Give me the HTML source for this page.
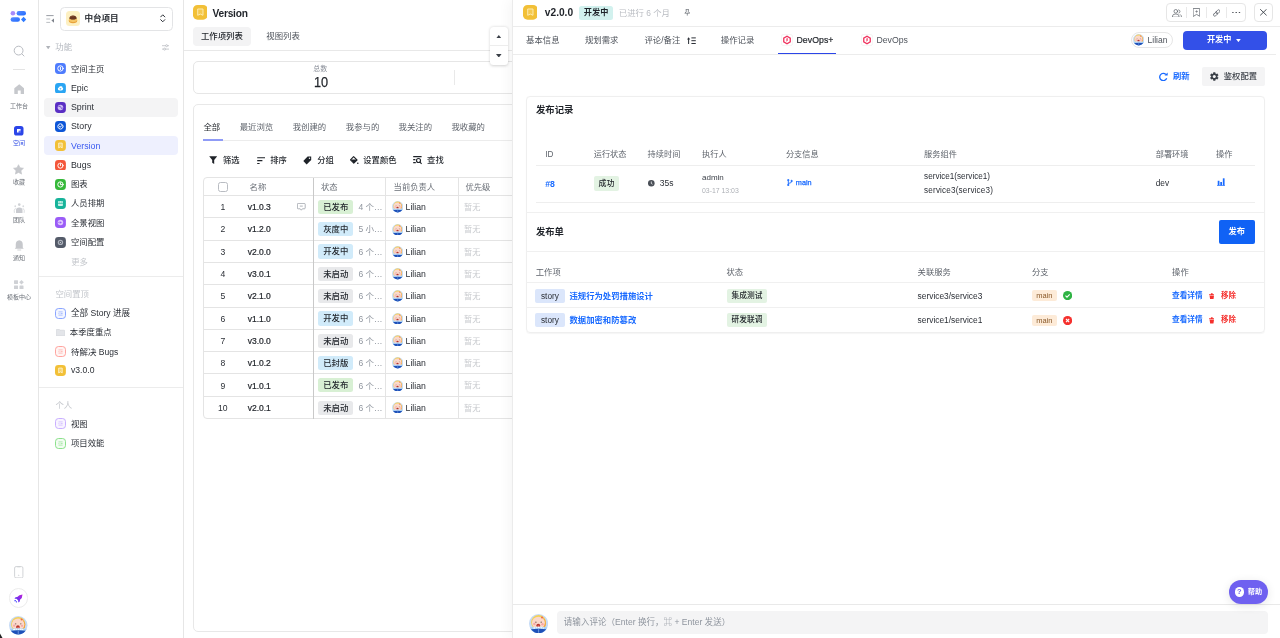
<!DOCTYPE html>
<html>
<head>
<meta charset="utf-8">
<title>Version</title>
<style>
*{box-sizing:border-box;margin:0;padding:0}
html,body{width:1280px;height:638px;overflow:hidden;background:#fff}
body{font-family:"Liberation Sans","Noto Sans CJK SC",sans-serif;font-size:9px;color:#1f2329;position:relative}
svg{display:block}
i{font-style:normal}
#rail{will-change:transform;position:absolute;left:0;top:0;width:39px;height:638px;border-right:1px solid #e6e6e6;background:#fff}
.rl{position:absolute;left:0;width:38px;text-align:center;font-size:6px;line-height:8px;color:#6b7078;white-space:nowrap}
.ri{position:absolute}
#side{will-change:transform;position:absolute;left:39px;top:0;width:145px;height:638px;border-right:1px solid #e6e6e6;background:#fff}
.sh{position:absolute;left:16px;font-size:9px;color:#b4b8bf;line-height:12px;white-space:nowrap}
.si{position:absolute;left:5px;width:134px;height:18px;border-radius:4px;line-height:18px;font-size:9px;color:#2b2f36;padding-left:27px;white-space:nowrap}
.si i{position:absolute;left:11px;top:3.5px;width:11px;height:11px;border-radius:3px;display:block}
.hr{position:absolute;height:1px;background:#ececec}
#main{will-change:transform;position:absolute;left:184px;top:0;width:330px;height:638px;background:#fff;overflow:hidden}
.card{position:absolute;border:1px solid #ebebeb;border-radius:5px;background:#fff}
.t{position:absolute;white-space:nowrap;line-height:12px}
#tb{position:absolute;left:20px;top:177px;width:320px;border:1px solid #e2e2e2;border-radius:4px 0 0 4px;border-right:none}
.tr{position:relative;height:22.2px;border-top:1px solid #e2e2e2;width:100%}
.tr.h{height:19px;border-top:none;color:#6b7078}
.tr span{position:absolute;top:0;line-height:21px;white-space:nowrap}
.tr.h span{line-height:19px}
.tr .tag{left:115px;top:4px;height:14px;width:35px;border-radius:2px;line-height:14px;text-align:center;font-size:9px;color:#1f2329}
.g{background:#d9f2d9}.b{background:#d3ecfb}.n{background:#e9eaec}
#panel{will-change:transform;position:absolute;left:512px;top:0;width:768px;height:638px;background:#fff;border-left:1px solid #ebebeb;box-shadow:-3px 0 12px rgba(0,0,0,.045)}
#fl{position:absolute;left:0;top:0;width:0;height:0}
</style>
</head>
<body>
<div id="rail">
<svg class="ri" style="left:10px;top:10px" width="17" height="13" viewBox="0 0 17 13">
<defs><linearGradient id="lg1" x1="0" y1="0" x2="1" y2="1"><stop offset="0" stop-color="#5b8cff"/><stop offset="1" stop-color="#1f6bff"/></linearGradient></defs>
<circle cx="2.9" cy="3.2" r="2.3" fill="#a78bfa"/>
<rect x="6.6" y="0.9" width="9.4" height="4.6" rx="2.300" fill="url(#lg1)"/>
<rect x="0.6" y="7.2" width="9.4" height="4.6" rx="2.300" fill="url(#lg1)"/>
<path d="M13.600 6.700 L16.200 9.500 L13.600 12.300 L11 9.500Z" fill="#2f7bff"/>
</svg>
<svg class="ri" style="left:12.500px;top:44.500px" width="12" height="12" viewBox="0 0 12 12" fill="none" stroke="#b9bcc2" stroke-width="1"><circle cx="5.600" cy="5.600" r="4.400"/><path d="M8.900 8.900 L11 11" stroke-linecap="round"/></svg>
<div class="hr" style="left:13px;top:69px;width:12px;background:#e4e4e4"></div>
<svg class="ri" style="left:13.500px;top:83.500px" width="10.500" height="10.500" viewBox="0 0 10.500 10.500"><path d="M5.250 0.300 L10.200 4.300 V9.400 Q10.200 10.200 9.400 10.200 H6.700 V6.600 H3.800 V10.200 H1.100 Q0.300 10.200 0.300 9.400 V4.300Z" fill="#c6c8cc"/></svg>
<div class="rl" style="top:101.800px">工作台</div>
<svg class="ri" style="left:14px;top:126px" width="9.500" height="9.500" viewBox="0 0 9.500 9.500"><rect width="9.500" height="9.500" rx="2.600" fill="#2b45e8"/><path d="M3 3 H6.600 V4.700 H4.700 V6.600 H3Z" fill="#fff"/><path d="M5.300 5.300 H6.600 V6.600 H5.300Z" fill="#8fa0ff"/></svg>
<div class="rl" style="top:139px;color:#3350e6">空间</div>
<svg class="ri" style="left:13px;top:163.500px" width="11" height="11" viewBox="0 0 24 24"><path d="M12 1.500 L15.300 8.300 L22.800 9.300 L17.300 14.500 L18.700 22 L12 18.300 L5.300 22 L6.700 14.500 L1.200 9.300 L8.700 8.300Z" fill="#c6c8cc" stroke="#c6c8cc" stroke-width="1.500" stroke-linejoin="round"/></svg>
<div class="rl" style="top:177.500px">收藏</div>
<svg class="ri" style="left:12.500px;top:202.500px" width="12.500" height="10.500" viewBox="0 0 25 21"><circle cx="12.500" cy="3.200" r="2.600" fill="#cfd1d5"/><circle cx="4.500" cy="6.500" r="1.800" fill="#d8dadd"/><circle cx="20.500" cy="6.500" r="1.800" fill="#d8dadd"/><path d="M6 20 V14 Q6 9 12.500 9 Q19 9 19 14 V20Z" fill="#c9cbd0"/><path d="M2.500 19 Q1 14 4.500 11" fill="none" stroke="#d2d4d8" stroke-width="1.600" stroke-linecap="round"/><path d="M22.500 19 Q24 14 20.500 11" fill="none" stroke="#d2d4d8" stroke-width="1.600" stroke-linecap="round"/></svg>
<div class="rl" style="top:215.800px">团队</div>
<svg class="ri" style="left:13.500px;top:240px" width="10.500" height="11" viewBox="0 0 21 22"><path d="M10.500 0.500 Q17.500 1.500 17.500 9 V15 L19.500 17.500 H1.500 L3.500 15 V9 Q3.500 1.500 10.500 0.500Z" fill="#c6c8cc"/><path d="M7.500 20 H13.500" stroke="#c6c8cc" stroke-width="1.600" stroke-linecap="round"/></svg>
<div class="rl" style="top:254.200px">通知</div>
<svg class="ri" style="left:13.800px;top:279.800px" width="10" height="9.600" viewBox="0 0 20 19.200"><rect x="0" y="0.600" width="8" height="7.600" rx="1" fill="#cfd1d5"/><rect x="0" y="11" width="8" height="7.600" rx="1" fill="#cfd1d5"/><rect x="11" y="11" width="8" height="7.600" rx="1" fill="#cfd1d5"/><path d="M15 0 L19.600 4.400 L15 8.800 L10.400 4.400Z" fill="#cfd1d5"/></svg>
<div class="rl" style="top:293.300px">模板中心</div>
<svg class="ri" style="left:14px;top:565.500px" width="9.500" height="12.500" viewBox="0 0 9.500 12.500" fill="none" stroke="#cdcfd3" stroke-width="0.9"><rect x="0.600" y="0.600" width="8.300" height="11.300" rx="1.400"/><path d="M3.200 0.800 H6.300" /><circle cx="4.750" cy="9.300" r="0.300"/></svg>
<div class="ri" style="left:8.500px;top:588px;width:19.500px;height:19.500px;border:1px solid #ececec;border-radius:50%"></div>
<svg class="ri" style="left:14px;top:593.500px" width="9" height="9" viewBox="0 0 18 18"><defs><linearGradient id="lg2" x1="0" y1="1" x2="1" y2="0"><stop offset="0" stop-color="#3b3bff"/><stop offset="1" stop-color="#c21fd6"/></linearGradient></defs><path d="M17 1 Q10 1 6.500 6 L3 6.500 L1 9.500 L5 9.500 L8.500 13 L8.500 17 L11.500 15 L12 11.500 Q17 8 17 1Z" fill="url(#lg2)"/><rect x="1" y="12" width="2.600" height="2.600" fill="#3b3bff"/><rect x="3.800" y="14.600" width="2.200" height="2.200" fill="#3b3bff"/></svg>
<svg style="position:absolute;left:9px;top:616px;" width="18.5" height="18.5" viewBox="0 0 24 24"><circle cx="12" cy="12" r="12" fill="#c6dbf6"/><circle cx="12" cy="10.600" r="9.300" fill="#f4d058"/><path d="M17 4 Q22.500 8 20.500 15.500 L16.500 17 Z" fill="#f2a23a"/><ellipse cx="11.800" cy="11" rx="8.100" ry="7.700" fill="#fbd8cb"/><circle cx="16.300" cy="4.400" r="1.300" fill="#ef6a4a"/><ellipse cx="8.600" cy="10.200" rx="1" ry="0.800" fill="#8a6d5e"/><ellipse cx="15.300" cy="10.200" rx="1" ry="0.800" fill="#8a6d5e"/><circle cx="6.700" cy="12.600" r="1.500" fill="#f7a8a8"/><circle cx="16.900" cy="12.800" r="1.500" fill="#f7a8a8"/><ellipse cx="11.600" cy="14.300" rx="2.400" ry="2.200" fill="#b5342b"/><ellipse cx="11.800" cy="15.500" rx="1.500" ry="1" fill="#f48a8a"/><path d="M1.100 17 Q12 14.800 22.900 17 A12 12 0 0 1 1.100 17Z" fill="#a5cff5"/><path d="M5.500 17.700 Q12 16.500 18.500 17.700" fill="none" stroke="#fff" stroke-width="1.400" stroke-dasharray="2.200 0.700"/><path d="M2.400 19.200 Q12 17.900 21.600 19.200 A12 12 0 0 1 2.400 19.200Z" fill="#1e50b8"/><path d="M12 19 V23.500" stroke="#9fc3ee" stroke-width="0.800"/></svg>
<svg class="ri" style="left:0;top:633px" width="3" height="5" viewBox="0 0 3 5"><path d="M0 0.500 L2.500 5 H0Z" fill="#222"/></svg>
</div>
<div id="side">
<svg style="position:absolute;left:7px;top:14.800px" width="8.500" height="8" viewBox="0 0 8.500 8" fill="none" stroke="#7d828b" stroke-width="0.800"><path d="M0.300 0.600 H7.600"/><path d="M0.300 4 H4.200" stroke="#a9adb4"/><path d="M0.300 7.400 H4.200" stroke="#a9adb4"/><path d="M8 3.400 V7.800 L5.400 5.600Z" fill="#7d828b" stroke="none"/></svg>
<div style="position:absolute;left:21px;top:6.500px;width:113px;height:24.500px;border:1px solid #e3e4e6;border-radius:4.500px"></div>
<div style="position:absolute;left:26.700000000000003px;top:11.300px;width:14.400px;height:14.400px;border-radius:3.500px;background:#fdf0c2"></div>
<svg style="position:absolute;left:29px;top:13.600px" width="10" height="10" viewBox="0 0 20 20"><ellipse cx="10" cy="13" rx="8.500" ry="5.500" fill="#e9a23a"/><ellipse cx="10" cy="11.500" rx="8" ry="4.500" fill="#f6c766"/><path d="M2.500 9 Q3 3 10 3 Q17 3 17.500 9 Q14 12 10 11 Q6 12 2.500 9Z" fill="#6b3620"/><path d="M5 6 Q8 3.500 12 4.500" stroke="#8e5231" stroke-width="1.200" fill="none"/></svg>
<div class="t" style="left:45.5px;top:11.600px;font-size:8.500px;font-weight:500;-webkit-text-stroke:0.200px #1f2329;color:#1f2329">中台项目</div>
<svg style="position:absolute;left:121.4px;top:14px" width="5.500" height="8.600" viewBox="0 0 5.500 8.600" fill="none" stroke="#2b2f36" stroke-width="1" stroke-linecap="round" stroke-linejoin="round"><path d="M0.700 2.900 L2.750 0.800 L4.800 2.900"/><path d="M0.700 5.700 L2.750 7.800 L4.800 5.700"/></svg>
<svg style="position:absolute;left:7.200000000000003px;top:45.800px" width="4.400" height="3.400" viewBox="0 0 4.400 3.400"><path d="M0 0 H4.400 L2.200 3.400Z" fill="#b0b3b9"/></svg>
<div class="sh" style="left:16.299999999999997px;top:41.300px;font-size:8.400px">功能</div>
<svg style="position:absolute;left:123.19999999999999px;top:44.200px" width="7.200" height="6.800" viewBox="0 0 7.200 6.800" fill="none" stroke="#b0b3b9" stroke-width="0.700"><path d="M0 1.700 H3.600 M5.600 1.700 H7.200 M0 5.100 H1.600 M3.600 5.100 H7.200"/><circle cx="4.600" cy="1.700" r="1"/><circle cx="2.600" cy="5.100" r="1"/></svg>
<div class="si" style="left:4.600000000000001px;top:59.2px;width:134.500px;height:18.800px;"></div>
<svg style="position:absolute;left:16.25px;top:63.25px" width="10.9" height="10.9" viewBox="0 0 11 11"><rect width="11" height="11" rx="3.400" fill="#4e7cfd"/><circle cx="5.500" cy="5.500" r="2.700" fill="none" stroke="#fff" stroke-width="1" stroke-linecap="round" stroke-linejoin="round" stroke-width="0.800"/><path d="M5.500 4.300 V6.700" fill="none" stroke="#fff" stroke-width="1" stroke-linecap="round" stroke-linejoin="round" stroke-width="0.900"/></svg>
<div class="t" style="left:32px;top:62.6px;font-size:8.35px;color:#2b2f36">空间主页</div>
<div class="si" style="left:4.600000000000001px;top:78.47px;width:134.500px;height:18.800px;"></div>
<svg style="position:absolute;left:16.25px;top:82.52px" width="10.9" height="10.9" viewBox="0 0 11 11"><rect width="11" height="11" rx="3.400" fill="#2aa5f3"/><path d="M3 6.500 Q2.400 4.800 4 4.600 Q4.500 3 6 3.400 Q7.600 3.200 7.600 4.800 Q8.800 5.200 8 6.500 Q7.800 7.600 5.500 7.500 Q3.200 7.600 3 6.500Z" fill="#fff"/><path d="M5.500 6.800 V5.200 M4.800 5.800 L5.500 5.100 L6.200 5.800" fill="none" stroke="#2aa5f3" stroke-width="0.600"/></svg>
<div class="t" style="left:32px;top:81.87px;font-size:8.8px;color:#2b2f36">Epic</div>
<div class="si" style="left:4.600000000000001px;top:97.74px;width:134.500px;height:18.800px;background:#f4f4f5;"></div>
<svg style="position:absolute;left:16.25px;top:101.79px" width="10.9" height="10.9" viewBox="0 0 11 11"><rect width="11" height="11" rx="3.400" fill="#5a2fc4"/><circle cx="5.500" cy="5.500" r="2.800" fill="#cdbdf3"/><path d="M3.500 4.500 Q5.500 3.500 6 5.500 Q6.500 7.500 7.800 6" fill="none" stroke="#5a2fc4" stroke-width="0.800"/></svg>
<div class="t" style="left:32px;top:101.14px;font-size:8.8px;color:#2b2f36">Sprint</div>
<div class="si" style="left:4.600000000000001px;top:117.01px;width:134.500px;height:18.800px;"></div>
<svg style="position:absolute;left:16.25px;top:121.06px" width="10.9" height="10.9" viewBox="0 0 11 11"><rect width="11" height="11" rx="3.400" fill="#0d56d8"/><circle cx="5.500" cy="5.500" r="2.700" fill="none" stroke="#fff" stroke-width="1" stroke-linecap="round" stroke-linejoin="round" stroke-width="0.800" stroke-dasharray="3.200 1"/><path d="M4.500 5.600 L5.300 6.300 L6.700 4.700" fill="none" stroke="#fff" stroke-width="1" stroke-linecap="round" stroke-linejoin="round" stroke-width="0.700"/></svg>
<div class="t" style="left:32px;top:120.41px;font-size:8.8px;color:#2b2f36">Story</div>
<div class="si" style="left:4.600000000000001px;top:136.28px;width:134.500px;height:18.800px;background:#eef0fe;"></div>
<svg style="position:absolute;left:16.25px;top:140.33px" width="10.9" height="10.9" viewBox="0 0 11 11"><rect width="11" height="11" rx="3.400" fill="#f2c037"/><path d="M3.700 3.100 H7.300 V8 L5.500 6.900 L3.700 8Z" fill="#f6d36a" stroke="#fff5d6" stroke-width="0.800" stroke-linejoin="round"/></svg>
<div class="t" style="left:32px;top:139.68px;font-size:8.8px;color:#3a5af0">Version</div>
<div class="si" style="left:4.600000000000001px;top:155.55px;width:134.500px;height:18.800px;"></div>
<svg style="position:absolute;left:16.25px;top:159.6px" width="10.9" height="10.9" viewBox="0 0 11 11"><rect width="11" height="11" rx="3.400" fill="#f4573b"/><circle cx="5.500" cy="5.700" r="2.600" fill="none" stroke="#fff" stroke-width="1" stroke-linecap="round" stroke-linejoin="round" stroke-width="0.800"/><path d="M5.500 3.400 V5.600" stroke="#f4573b" stroke-width="1.800"/><path d="M5.500 3.600 V5.600" fill="none" stroke="#fff" stroke-width="1" stroke-linecap="round" stroke-linejoin="round" stroke-width="0.800"/></svg>
<div class="t" style="left:32px;top:158.95px;font-size:8.8px;color:#2b2f36">Bugs</div>
<div class="si" style="left:4.600000000000001px;top:174.82px;width:134.500px;height:18.800px;"></div>
<svg style="position:absolute;left:16.25px;top:178.87px" width="10.9" height="10.9" viewBox="0 0 11 11"><rect width="11" height="11" rx="3.400" fill="#36b93a"/><circle cx="5.500" cy="5.500" r="2.700" fill="none" stroke="#fff" stroke-width="1" stroke-linecap="round" stroke-linejoin="round" stroke-width="0.800"/><path d="M5.500 3.800 V5.700 H7.200" fill="none" stroke="#fff" stroke-width="1" stroke-linecap="round" stroke-linejoin="round" stroke-width="0.800"/></svg>
<div class="t" style="left:32px;top:178.22px;font-size:8.35px;color:#2b2f36">图表</div>
<div class="si" style="left:4.600000000000001px;top:194.09px;width:134.500px;height:18.800px;"></div>
<svg style="position:absolute;left:16.25px;top:198.14px" width="10.9" height="10.9" viewBox="0 0 11 11"><rect width="11" height="11" rx="3.400" fill="#17b39a"/><rect x="3" y="3" width="5" height="5" rx="0.800" fill="#c9f1e9"/><path d="M3 5.400 H8" stroke="#17b39a" stroke-width="0.700"/><path d="M4.400 3.600 V4.400 M6.600 3.600 V4.400" stroke="#17b39a" stroke-width="0.600"/></svg>
<div class="t" style="left:32px;top:197.49px;font-size:8.35px;color:#2b2f36">人员排期</div>
<div class="si" style="left:4.600000000000001px;top:213.36px;width:134.500px;height:18.800px;"></div>
<svg style="position:absolute;left:16.25px;top:217.41px" width="10.9" height="10.9" viewBox="0 0 11 11"><rect width="11" height="11" rx="3.400" fill="#9a5cf7"/><circle cx="5.500" cy="5.500" r="2.800" fill="#dcc7fd"/><path d="M4.800 4.200 L7 5.500 L4.800 6.800Z" fill="#9a5cf7"/><path d="M3 5.500 H4.600" stroke="#9a5cf7" stroke-width="0.600"/></svg>
<div class="t" style="left:32px;top:216.76px;font-size:8.35px;color:#2b2f36">全景视图</div>
<div class="si" style="left:4.600000000000001px;top:232.63px;width:134.500px;height:18.800px;"></div>
<svg style="position:absolute;left:16.25px;top:236.68px" width="10.9" height="10.9" viewBox="0 0 11 11"><rect width="11" height="11" rx="3.400" fill="#545b69"/><circle cx="5.500" cy="5.500" r="2.700" fill="#aeb3bd"/><circle cx="5.500" cy="5.500" r="1.500" fill="#545b69"/><circle cx="5.500" cy="5.500" r="0.700" fill="#c4c8d0"/></svg>
<div class="t" style="left:32px;top:236.03px;font-size:8.35px;color:#2b2f36">空间配置</div>
<div class="t" style="left:32.2px;top:256px;font-size:8.400px;color:#c3c6cb">更多</div>
<div class="hr" style="left:0;top:276px;width:144px"></div>
<div class="sh" style="left:16.5px;top:287.900px;font-size:8.400px;color:#c3c6cb">空间置顶</div>
<svg style="position:absolute;left:16.200000000000003px;top:307.6px" width="11" height="11" viewBox="0 0 11 11"><rect x="0.500" y="0.500" width="10" height="10" rx="3" fill="#f3f6ff" stroke="#7d9bff" stroke-width="0.900"/><path d="M3.500 3.900 H7.600 M3.500 5.500 H4.400 M3.500 7.100 H7.600 M5.600 5.500 H7.600" stroke="#7d9bff" stroke-width="0.600" fill="none"/></svg>
<div class="t" style="left:32px;top:307px;font-size:8.600px;color:#2b2f36">全部 Story 进展</div>
<svg style="position:absolute;left:17px;top:328.500px" width="9" height="7.400" viewBox="0 0 9 7.400"><path d="M0.300 1 Q0.300 0.300 1 0.300 H3.200 L4 1.200 H8 Q8.700 1.200 8.700 1.900 V6.400 Q8.700 7.100 8 7.100 H1 Q0.300 7.100 0.300 6.400Z" fill="#e3e5e9" stroke="#c9ccd2" stroke-width="0.500"/></svg>
<div class="t" style="left:30.799999999999997px;top:326.200px;font-size:8.400px;color:#2b2f36">本季度重点</div>
<svg style="position:absolute;left:16.200000000000003px;top:346.1px" width="11" height="11" viewBox="0 0 11 11"><rect x="0.500" y="0.500" width="10" height="10" rx="3" fill="#fff5f4" stroke="#ff9a94" stroke-width="0.900"/><path d="M3.500 3.900 H7.600 M3.500 5.500 H4.400 M3.500 7.100 H7.600 M5.600 5.500 H7.600" stroke="#ff9a94" stroke-width="0.600" fill="none"/></svg>
<div class="t" style="left:32px;top:345.500px;font-size:8.500px;color:#2b2f36">待解决 Bugs</div>
<svg style="position:absolute;left:16.299999999999997px;top:364.9px" width="10.9" height="10.9" viewBox="0 0 11 11"><rect width="11" height="11" rx="3.400" fill="#f2c037"/><path d="M3.700 3.100 H7.300 V8 L5.500 6.900 L3.700 8Z" fill="#f6d36a" stroke="#fff5d6" stroke-width="0.800" stroke-linejoin="round"/></svg>
<div class="t" style="left:32px;top:364.300px;font-size:8.600px;color:#2b2f36">v3.0.0</div>
<div class="hr" style="left:0;top:387px;width:144px"></div>
<div class="sh" style="left:16.5px;top:398.500px;font-size:8.400px;color:#c3c6cb">个人</div>
<svg style="position:absolute;left:16.200000000000003px;top:418.3px" width="11" height="11" viewBox="0 0 11 11"><rect x="0.500" y="0.500" width="10" height="10" rx="3" fill="#f8f4ff" stroke="#c3a6ff" stroke-width="0.900"/><path d="M3.500 3.900 H7.600 M3.500 5.500 H4.400 M3.500 7.100 H7.600 M5.600 5.500 H7.600" stroke="#c3a6ff" stroke-width="0.600" fill="none"/></svg>
<div class="t" style="left:32px;top:417.800px;font-size:8.400px;color:#2b2f36">视图</div>
<svg style="position:absolute;left:16.200000000000003px;top:437.6px" width="11" height="11" viewBox="0 0 11 11"><rect x="0.500" y="0.500" width="10" height="10" rx="3" fill="#f2fcf2" stroke="#7fdc7f" stroke-width="0.900"/><path d="M3.500 3.900 H7.600 M3.500 5.500 H4.400 M3.500 7.100 H7.600 M5.600 5.500 H7.600" stroke="#7fdc7f" stroke-width="0.600" fill="none"/></svg>
<div class="t" style="left:32px;top:437.100px;font-size:8.400px;color:#2b2f36">项目效能</div>
</div>
<div id="main">
<svg style="position:absolute;left:8.7px;top:5.200px" width="14.700" height="14.700" viewBox="0 0 14.700 14.700"><rect width="14.700" height="14.700" rx="4.500" fill="#f2c037"/><path d="M4.700 4 H10 V10.300 L7.350 9.100 L4.700 10.300Z" fill="#f4c94f" stroke="#fdeebb" stroke-width="0.900" stroke-linejoin="round"/></svg>
<div class="t" style="left:28.6px;top:7.700px;font-size:10.200px;font-weight:bold;letter-spacing:-0.250px;color:#1f2329">Version</div>
<div style="position:absolute;left:9.3px;top:27px;width:57.500px;height:18.800px;border-radius:4px;background:#f3f3f4"></div>
<div class="t" style="left:17px;top:30px;font-size:8.400px;font-weight:500;color:#1f2329">工作项列表</div>
<div class="t" style="left:82.3px;top:30px;font-size:8.400px;color:#4e535b">视图列表</div>
<div class="hr" style="left:0;top:50px;width:330px;background:#e8e8e8"></div>
<div class="card" style="left:9.3px;top:61px;width:400px;height:33px;border-color:#e6e6e6"></div>
<div class="t" style="left:129.3px;top:63.300px;font-size:7px;color:#8a8f99">总数</div>
<div class="t" style="left:129.6px;top:73.300px;font-size:14.800px;line-height:18px;color:#1f2329;transform:scaleX(0.860);-webkit-text-stroke:0.250px #1f2329;transform-origin:0 0">10</div>
<div style="position:absolute;left:270px;top:70px;width:1px;height:15px;background:#e9e9e9"></div>
<div class="card" style="left:9.3px;top:104px;width:400px;height:528.300px;border-color:#e8e8e8"></div>
<div class="t" style="left:19.4px;top:121.300px;font-size:8.400px;color:#1f2329">全部</div>
<div class="t" style="left:55.7px;top:121.300px;font-size:8.400px;color:#5f646c">最近浏览</div>
<div class="t" style="left:108.7px;top:121.300px;font-size:8.400px;color:#5f646c">我创建的</div>
<div class="t" style="left:161.8px;top:121.300px;font-size:8.400px;color:#5f646c">我参与的</div>
<div class="t" style="left:214.6px;top:121.300px;font-size:8.400px;color:#5f646c">我关注的</div>
<div class="t" style="left:267.4px;top:121.300px;font-size:8.400px;color:#5f646c">我收藏的</div>
<div class="hr" style="left:19px;top:140px;width:320px;background:#ececec"></div>
<div style="position:absolute;left:19.1px;top:138.800px;width:19.600px;height:2.200px;background:#8f9bf6"></div>
<svg style="position:absolute;left:25px;top:156.200px" width="8.400" height="8.200" viewBox="0 0 8.400 8.200"><path d="M0.200 0.200 H8.200 L5.200 4 V8 L3.200 6.800 V4Z" fill="#1f2329"/></svg>
<svg style="position:absolute;left:72.5px;top:156.800px" width="8.600" height="7.200" viewBox="0 0 8.600 7.200" stroke="#1f2329" stroke-width="1.100" fill="none"><path d="M0.200 0.700 H8.400 M0.200 3.600 H5.400 M0.200 6.500 H2.600"/></svg>
<svg style="position:absolute;left:119.3px;top:156px" width="8.600" height="8.600" viewBox="0 0 8.600 8.600"><path d="M4.600 0.400 L8.200 0.400 L8.200 4 L3.600 8.400 L0.300 5Z" fill="#1f2329"/><circle cx="6.500" cy="2.200" r="0.700" fill="#fff"/></svg>
<svg style="position:absolute;left:166px;top:155.800px" width="8.800" height="8.800" viewBox="0 0 8.800 8.800"><path d="M3.600 0.600 L7 4 L3.800 7.200 L0.500 3.900Z" fill="none" stroke="#1f2329" stroke-width="1.100" stroke-linejoin="round"/><path d="M0.600 3.600 H7 L3.800 7.200Z" fill="#1f2329"/><circle cx="7.800" cy="7.200" r="0.800" fill="#1f2329"/></svg>
<svg style="position:absolute;left:228.8px;top:156.200px" width="9" height="8.400" viewBox="0 0 9 8.400" fill="none" stroke="#1f2329" stroke-width="1.150"><path d="M0.200 0.700 H8.600 M0.200 3.700 H2.400 M0.200 6.700 H2.800"/><circle cx="5.500" cy="4.500" r="2"/><path d="M7 6.100 L8.600 7.800"/></svg>
<div class="t" style="left:39px;top:153.900px;font-size:8.300px;font-weight:500;color:#1f2329">筛选</div>
<div class="t" style="left:86.3px;top:153.900px;font-size:8.300px;font-weight:500;color:#1f2329">排序</div>
<div class="t" style="left:133.3px;top:153.900px;font-size:8.300px;font-weight:500;color:#1f2329">分组</div>
<div class="t" style="left:179.3px;top:153.900px;font-size:8.300px;font-weight:500;color:#1f2329">设置颜色</div>
<div class="t" style="left:243.1px;top:153.900px;font-size:8.300px;font-weight:500;color:#1f2329">查找</div>
<div style="position:absolute;left:19.3px;top:177px;width:330px;height:242px;border:1px solid #e4e4e4;border-radius:4px"></div>
<div class="hr" style="left:20px;top:195.1px;width:320px;background:#e4e4e4"></div>
<div class="hr" style="left:20px;top:217.39px;width:320px;background:#e4e4e4"></div>
<div class="hr" style="left:20px;top:239.68px;width:320px;background:#e4e4e4"></div>
<div class="hr" style="left:20px;top:261.97px;width:320px;background:#e4e4e4"></div>
<div class="hr" style="left:20px;top:284.26px;width:320px;background:#e4e4e4"></div>
<div class="hr" style="left:20px;top:306.55px;width:320px;background:#e4e4e4"></div>
<div class="hr" style="left:20px;top:328.84px;width:320px;background:#e4e4e4"></div>
<div class="hr" style="left:20px;top:351.13px;width:320px;background:#e4e4e4"></div>
<div class="hr" style="left:20px;top:373.42px;width:320px;background:#e4e4e4"></div>
<div class="hr" style="left:20px;top:395.71px;width:320px;background:#e4e4e4"></div>
<div style="position:absolute;left:129px;top:177.500px;width:1.200px;height:241.200px;background:#c9c9c9"></div>
<div style="position:absolute;left:201.2px;top:177.500px;width:1px;height:241.200px;background:#e4e4e4"></div>
<div style="position:absolute;left:273.5px;top:177.500px;width:1px;height:241.200px;background:#e4e4e4"></div>
<div style="position:absolute;left:34.1px;top:182.200px;width:9.600px;height:9.600px;border:1px solid #b9bcc2;border-radius:2.500px;background:#fff"></div>
<div class="t" style="left:65.6px;top:181px;font-size:8.300px;color:#6b7078">名称</div>
<div class="t" style="left:137px;top:181px;font-size:8.300px;color:#6b7078">状态</div>
<div class="t" style="left:209.6px;top:181px;font-size:8.300px;color:#6b7078">当前负责人</div>
<div class="t" style="left:281.5px;top:181px;font-size:8.300px;color:#6b7078">优先级</div>
<div class="t" style="left:28.8px;top:201.2px;width:20px;text-align:center;font-size:8.600px;color:#2b2f36">1</div>
<div class="t" style="left:63.7px;top:201.2px;font-size:8.500px;color:#1f2329;-webkit-text-stroke:0.220px #1f2329">v1.0.3</div>
<svg style="position:absolute;left:113.2px;top:203.2px" width="8.600" height="7.800" viewBox="0 0 8.600 7.800" fill="none" stroke="#8f959e" stroke-width="0.700" stroke-linejoin="round"><path d="M1.200 0.400 H7.400 Q8.200 0.400 8.200 1.200 V5 Q8.200 5.800 7.400 5.800 H5.400 L4.300 7.200 L3.200 5.800 H1.200 Q0.400 5.800 0.400 5 V1.200 Q0.400 0.400 1.200 0.400Z"/><path d="M2.800 3.100 H5.800"/></svg>
<div style="position:absolute;left:134.1px;top:199.9px;width:35.400px;height:14.200px;border-radius:2.500px;background:#d8f0d4"></div>
<div class="t" style="left:134.1px;top:200.9px;width:35.400px;text-align:center;font-size:8.400px;font-weight:500;color:#1f2329">已发布</div>
<div class="t" style="left:174.4px;top:201.2px;font-size:8.500px;color:#8f959e">4 个…</div>
<svg style="position:absolute;left:207.8px;top:201.3px;" width="11.4" height="11.4" viewBox="0 0 24 24"><circle cx="12" cy="12" r="12" fill="#c6dbf6"/><circle cx="12" cy="10.600" r="9.300" fill="#f4d058"/><path d="M17 4 Q22.500 8 20.500 15.500 L16.500 17 Z" fill="#f2a23a"/><ellipse cx="11.800" cy="11" rx="8.100" ry="7.700" fill="#fbd8cb"/><circle cx="16.300" cy="4.400" r="1.300" fill="#ef6a4a"/><ellipse cx="8.600" cy="10.200" rx="1" ry="0.800" fill="#8a6d5e"/><ellipse cx="15.300" cy="10.200" rx="1" ry="0.800" fill="#8a6d5e"/><circle cx="6.700" cy="12.600" r="1.500" fill="#f7a8a8"/><circle cx="16.900" cy="12.800" r="1.500" fill="#f7a8a8"/><ellipse cx="11.600" cy="14.300" rx="2.400" ry="2.200" fill="#b5342b"/><ellipse cx="11.800" cy="15.500" rx="1.500" ry="1" fill="#f48a8a"/><path d="M1.100 17 Q12 14.800 22.900 17 A12 12 0 0 1 1.100 17Z" fill="#a5cff5"/><path d="M5.500 17.700 Q12 16.500 18.500 17.700" fill="none" stroke="#fff" stroke-width="1.400" stroke-dasharray="2.200 0.700"/><path d="M2.400 19.200 Q12 17.900 21.600 19.200 A12 12 0 0 1 2.400 19.200Z" fill="#1e50b8"/><path d="M12 19 V23.500" stroke="#9fc3ee" stroke-width="0.800"/></svg>
<div class="t" style="left:221.6px;top:201.2px;font-size:8.700px;color:#2b2f36">Lilian</div>
<div class="t" style="left:280px;top:202.1px;font-size:8.200px;color:#c9cbcf">暂无</div>
<div class="t" style="left:28.8px;top:223.49px;width:20px;text-align:center;font-size:8.600px;color:#2b2f36">2</div>
<div class="t" style="left:63.7px;top:223.49px;font-size:8.500px;color:#1f2329;-webkit-text-stroke:0.220px #1f2329">v1.2.0</div>
<div style="position:absolute;left:134.1px;top:222.19px;width:35.400px;height:14.200px;border-radius:2.500px;background:#d1ebfa"></div>
<div class="t" style="left:134.1px;top:223.19px;width:35.400px;text-align:center;font-size:8.400px;font-weight:500;color:#1f2329">灰度中</div>
<div class="t" style="left:174.4px;top:223.49px;font-size:8.500px;color:#8f959e">5 小…</div>
<svg style="position:absolute;left:207.8px;top:223.59px;" width="11.4" height="11.4" viewBox="0 0 24 24"><circle cx="12" cy="12" r="12" fill="#c6dbf6"/><circle cx="12" cy="10.600" r="9.300" fill="#f4d058"/><path d="M17 4 Q22.500 8 20.500 15.500 L16.500 17 Z" fill="#f2a23a"/><ellipse cx="11.800" cy="11" rx="8.100" ry="7.700" fill="#fbd8cb"/><circle cx="16.300" cy="4.400" r="1.300" fill="#ef6a4a"/><ellipse cx="8.600" cy="10.200" rx="1" ry="0.800" fill="#8a6d5e"/><ellipse cx="15.300" cy="10.200" rx="1" ry="0.800" fill="#8a6d5e"/><circle cx="6.700" cy="12.600" r="1.500" fill="#f7a8a8"/><circle cx="16.900" cy="12.800" r="1.500" fill="#f7a8a8"/><ellipse cx="11.600" cy="14.300" rx="2.400" ry="2.200" fill="#b5342b"/><ellipse cx="11.800" cy="15.500" rx="1.500" ry="1" fill="#f48a8a"/><path d="M1.100 17 Q12 14.800 22.900 17 A12 12 0 0 1 1.100 17Z" fill="#a5cff5"/><path d="M5.500 17.700 Q12 16.500 18.500 17.700" fill="none" stroke="#fff" stroke-width="1.400" stroke-dasharray="2.200 0.700"/><path d="M2.400 19.200 Q12 17.900 21.600 19.200 A12 12 0 0 1 2.400 19.200Z" fill="#1e50b8"/><path d="M12 19 V23.500" stroke="#9fc3ee" stroke-width="0.800"/></svg>
<div class="t" style="left:221.6px;top:223.49px;font-size:8.700px;color:#2b2f36">Lilian</div>
<div class="t" style="left:280px;top:224.39px;font-size:8.200px;color:#c9cbcf">暂无</div>
<div class="t" style="left:28.8px;top:245.78px;width:20px;text-align:center;font-size:8.600px;color:#2b2f36">3</div>
<div class="t" style="left:63.7px;top:245.78px;font-size:8.500px;color:#1f2329;-webkit-text-stroke:0.220px #1f2329">v2.0.0</div>
<div style="position:absolute;left:134.1px;top:244.48px;width:35.400px;height:14.200px;border-radius:2.500px;background:#d1ebfa"></div>
<div class="t" style="left:134.1px;top:245.48px;width:35.400px;text-align:center;font-size:8.400px;font-weight:500;color:#1f2329">开发中</div>
<div class="t" style="left:174.4px;top:245.78px;font-size:8.500px;color:#8f959e">6 个…</div>
<svg style="position:absolute;left:207.8px;top:245.88px;" width="11.4" height="11.4" viewBox="0 0 24 24"><circle cx="12" cy="12" r="12" fill="#c6dbf6"/><circle cx="12" cy="10.600" r="9.300" fill="#f4d058"/><path d="M17 4 Q22.500 8 20.500 15.500 L16.500 17 Z" fill="#f2a23a"/><ellipse cx="11.800" cy="11" rx="8.100" ry="7.700" fill="#fbd8cb"/><circle cx="16.300" cy="4.400" r="1.300" fill="#ef6a4a"/><ellipse cx="8.600" cy="10.200" rx="1" ry="0.800" fill="#8a6d5e"/><ellipse cx="15.300" cy="10.200" rx="1" ry="0.800" fill="#8a6d5e"/><circle cx="6.700" cy="12.600" r="1.500" fill="#f7a8a8"/><circle cx="16.900" cy="12.800" r="1.500" fill="#f7a8a8"/><ellipse cx="11.600" cy="14.300" rx="2.400" ry="2.200" fill="#b5342b"/><ellipse cx="11.800" cy="15.500" rx="1.500" ry="1" fill="#f48a8a"/><path d="M1.100 17 Q12 14.800 22.900 17 A12 12 0 0 1 1.100 17Z" fill="#a5cff5"/><path d="M5.500 17.700 Q12 16.500 18.500 17.700" fill="none" stroke="#fff" stroke-width="1.400" stroke-dasharray="2.200 0.700"/><path d="M2.400 19.200 Q12 17.900 21.600 19.200 A12 12 0 0 1 2.400 19.200Z" fill="#1e50b8"/><path d="M12 19 V23.500" stroke="#9fc3ee" stroke-width="0.800"/></svg>
<div class="t" style="left:221.6px;top:245.78px;font-size:8.700px;color:#2b2f36">Lilian</div>
<div class="t" style="left:280px;top:246.68px;font-size:8.200px;color:#c9cbcf">暂无</div>
<div class="t" style="left:28.8px;top:268.07px;width:20px;text-align:center;font-size:8.600px;color:#2b2f36">4</div>
<div class="t" style="left:63.7px;top:268.07px;font-size:8.500px;color:#1f2329;-webkit-text-stroke:0.220px #1f2329">v3.0.1</div>
<div style="position:absolute;left:134.1px;top:266.77px;width:35.400px;height:14.200px;border-radius:2.500px;background:#e8e9eb"></div>
<div class="t" style="left:134.1px;top:267.77px;width:35.400px;text-align:center;font-size:8.400px;font-weight:500;color:#1f2329">未启动</div>
<div class="t" style="left:174.4px;top:268.07px;font-size:8.500px;color:#8f959e">6 个…</div>
<svg style="position:absolute;left:207.8px;top:268.17px;" width="11.4" height="11.4" viewBox="0 0 24 24"><circle cx="12" cy="12" r="12" fill="#c6dbf6"/><circle cx="12" cy="10.600" r="9.300" fill="#f4d058"/><path d="M17 4 Q22.500 8 20.500 15.500 L16.500 17 Z" fill="#f2a23a"/><ellipse cx="11.800" cy="11" rx="8.100" ry="7.700" fill="#fbd8cb"/><circle cx="16.300" cy="4.400" r="1.300" fill="#ef6a4a"/><ellipse cx="8.600" cy="10.200" rx="1" ry="0.800" fill="#8a6d5e"/><ellipse cx="15.300" cy="10.200" rx="1" ry="0.800" fill="#8a6d5e"/><circle cx="6.700" cy="12.600" r="1.500" fill="#f7a8a8"/><circle cx="16.900" cy="12.800" r="1.500" fill="#f7a8a8"/><ellipse cx="11.600" cy="14.300" rx="2.400" ry="2.200" fill="#b5342b"/><ellipse cx="11.800" cy="15.500" rx="1.500" ry="1" fill="#f48a8a"/><path d="M1.100 17 Q12 14.800 22.900 17 A12 12 0 0 1 1.100 17Z" fill="#a5cff5"/><path d="M5.500 17.700 Q12 16.500 18.500 17.700" fill="none" stroke="#fff" stroke-width="1.400" stroke-dasharray="2.200 0.700"/><path d="M2.400 19.200 Q12 17.900 21.600 19.200 A12 12 0 0 1 2.400 19.200Z" fill="#1e50b8"/><path d="M12 19 V23.500" stroke="#9fc3ee" stroke-width="0.800"/></svg>
<div class="t" style="left:221.6px;top:268.07px;font-size:8.700px;color:#2b2f36">Lilian</div>
<div class="t" style="left:280px;top:268.97px;font-size:8.200px;color:#c9cbcf">暂无</div>
<div class="t" style="left:28.8px;top:290.36px;width:20px;text-align:center;font-size:8.600px;color:#2b2f36">5</div>
<div class="t" style="left:63.7px;top:290.36px;font-size:8.500px;color:#1f2329;-webkit-text-stroke:0.220px #1f2329">v2.1.0</div>
<div style="position:absolute;left:134.1px;top:289.06px;width:35.400px;height:14.200px;border-radius:2.500px;background:#e8e9eb"></div>
<div class="t" style="left:134.1px;top:290.06px;width:35.400px;text-align:center;font-size:8.400px;font-weight:500;color:#1f2329">未启动</div>
<div class="t" style="left:174.4px;top:290.36px;font-size:8.500px;color:#8f959e">6 个…</div>
<svg style="position:absolute;left:207.8px;top:290.46px;" width="11.4" height="11.4" viewBox="0 0 24 24"><circle cx="12" cy="12" r="12" fill="#c6dbf6"/><circle cx="12" cy="10.600" r="9.300" fill="#f4d058"/><path d="M17 4 Q22.500 8 20.500 15.500 L16.500 17 Z" fill="#f2a23a"/><ellipse cx="11.800" cy="11" rx="8.100" ry="7.700" fill="#fbd8cb"/><circle cx="16.300" cy="4.400" r="1.300" fill="#ef6a4a"/><ellipse cx="8.600" cy="10.200" rx="1" ry="0.800" fill="#8a6d5e"/><ellipse cx="15.300" cy="10.200" rx="1" ry="0.800" fill="#8a6d5e"/><circle cx="6.700" cy="12.600" r="1.500" fill="#f7a8a8"/><circle cx="16.900" cy="12.800" r="1.500" fill="#f7a8a8"/><ellipse cx="11.600" cy="14.300" rx="2.400" ry="2.200" fill="#b5342b"/><ellipse cx="11.800" cy="15.500" rx="1.500" ry="1" fill="#f48a8a"/><path d="M1.100 17 Q12 14.800 22.900 17 A12 12 0 0 1 1.100 17Z" fill="#a5cff5"/><path d="M5.500 17.700 Q12 16.500 18.500 17.700" fill="none" stroke="#fff" stroke-width="1.400" stroke-dasharray="2.200 0.700"/><path d="M2.400 19.200 Q12 17.900 21.600 19.200 A12 12 0 0 1 2.400 19.200Z" fill="#1e50b8"/><path d="M12 19 V23.500" stroke="#9fc3ee" stroke-width="0.800"/></svg>
<div class="t" style="left:221.6px;top:290.36px;font-size:8.700px;color:#2b2f36">Lilian</div>
<div class="t" style="left:280px;top:291.26px;font-size:8.200px;color:#c9cbcf">暂无</div>
<div class="t" style="left:28.8px;top:312.65px;width:20px;text-align:center;font-size:8.600px;color:#2b2f36">6</div>
<div class="t" style="left:63.7px;top:312.65px;font-size:8.500px;color:#1f2329;-webkit-text-stroke:0.220px #1f2329">v1.1.0</div>
<div style="position:absolute;left:134.1px;top:311.35px;width:35.400px;height:14.200px;border-radius:2.500px;background:#d1ebfa"></div>
<div class="t" style="left:134.1px;top:312.35px;width:35.400px;text-align:center;font-size:8.400px;font-weight:500;color:#1f2329">开发中</div>
<div class="t" style="left:174.4px;top:312.65px;font-size:8.500px;color:#8f959e">6 个…</div>
<svg style="position:absolute;left:207.8px;top:312.75px;" width="11.4" height="11.4" viewBox="0 0 24 24"><circle cx="12" cy="12" r="12" fill="#c6dbf6"/><circle cx="12" cy="10.600" r="9.300" fill="#f4d058"/><path d="M17 4 Q22.500 8 20.500 15.500 L16.500 17 Z" fill="#f2a23a"/><ellipse cx="11.800" cy="11" rx="8.100" ry="7.700" fill="#fbd8cb"/><circle cx="16.300" cy="4.400" r="1.300" fill="#ef6a4a"/><ellipse cx="8.600" cy="10.200" rx="1" ry="0.800" fill="#8a6d5e"/><ellipse cx="15.300" cy="10.200" rx="1" ry="0.800" fill="#8a6d5e"/><circle cx="6.700" cy="12.600" r="1.500" fill="#f7a8a8"/><circle cx="16.900" cy="12.800" r="1.500" fill="#f7a8a8"/><ellipse cx="11.600" cy="14.300" rx="2.400" ry="2.200" fill="#b5342b"/><ellipse cx="11.800" cy="15.500" rx="1.500" ry="1" fill="#f48a8a"/><path d="M1.100 17 Q12 14.800 22.900 17 A12 12 0 0 1 1.100 17Z" fill="#a5cff5"/><path d="M5.500 17.700 Q12 16.500 18.500 17.700" fill="none" stroke="#fff" stroke-width="1.400" stroke-dasharray="2.200 0.700"/><path d="M2.400 19.200 Q12 17.900 21.600 19.200 A12 12 0 0 1 2.400 19.200Z" fill="#1e50b8"/><path d="M12 19 V23.500" stroke="#9fc3ee" stroke-width="0.800"/></svg>
<div class="t" style="left:221.6px;top:312.65px;font-size:8.700px;color:#2b2f36">Lilian</div>
<div class="t" style="left:280px;top:313.55px;font-size:8.200px;color:#c9cbcf">暂无</div>
<div class="t" style="left:28.8px;top:334.94px;width:20px;text-align:center;font-size:8.600px;color:#2b2f36">7</div>
<div class="t" style="left:63.7px;top:334.94px;font-size:8.500px;color:#1f2329;-webkit-text-stroke:0.220px #1f2329">v3.0.0</div>
<div style="position:absolute;left:134.1px;top:333.64px;width:35.400px;height:14.200px;border-radius:2.500px;background:#e8e9eb"></div>
<div class="t" style="left:134.1px;top:334.64px;width:35.400px;text-align:center;font-size:8.400px;font-weight:500;color:#1f2329">未启动</div>
<div class="t" style="left:174.4px;top:334.94px;font-size:8.500px;color:#8f959e">6 个…</div>
<svg style="position:absolute;left:207.8px;top:335.04px;" width="11.4" height="11.4" viewBox="0 0 24 24"><circle cx="12" cy="12" r="12" fill="#c6dbf6"/><circle cx="12" cy="10.600" r="9.300" fill="#f4d058"/><path d="M17 4 Q22.500 8 20.500 15.500 L16.500 17 Z" fill="#f2a23a"/><ellipse cx="11.800" cy="11" rx="8.100" ry="7.700" fill="#fbd8cb"/><circle cx="16.300" cy="4.400" r="1.300" fill="#ef6a4a"/><ellipse cx="8.600" cy="10.200" rx="1" ry="0.800" fill="#8a6d5e"/><ellipse cx="15.300" cy="10.200" rx="1" ry="0.800" fill="#8a6d5e"/><circle cx="6.700" cy="12.600" r="1.500" fill="#f7a8a8"/><circle cx="16.900" cy="12.800" r="1.500" fill="#f7a8a8"/><ellipse cx="11.600" cy="14.300" rx="2.400" ry="2.200" fill="#b5342b"/><ellipse cx="11.800" cy="15.500" rx="1.500" ry="1" fill="#f48a8a"/><path d="M1.100 17 Q12 14.800 22.900 17 A12 12 0 0 1 1.100 17Z" fill="#a5cff5"/><path d="M5.500 17.700 Q12 16.500 18.500 17.700" fill="none" stroke="#fff" stroke-width="1.400" stroke-dasharray="2.200 0.700"/><path d="M2.400 19.200 Q12 17.900 21.600 19.200 A12 12 0 0 1 2.400 19.200Z" fill="#1e50b8"/><path d="M12 19 V23.500" stroke="#9fc3ee" stroke-width="0.800"/></svg>
<div class="t" style="left:221.6px;top:334.94px;font-size:8.700px;color:#2b2f36">Lilian</div>
<div class="t" style="left:280px;top:335.84px;font-size:8.200px;color:#c9cbcf">暂无</div>
<div class="t" style="left:28.8px;top:357.23px;width:20px;text-align:center;font-size:8.600px;color:#2b2f36">8</div>
<div class="t" style="left:63.7px;top:357.23px;font-size:8.500px;color:#1f2329;-webkit-text-stroke:0.220px #1f2329">v1.0.2</div>
<div style="position:absolute;left:134.1px;top:355.93px;width:35.400px;height:14.200px;border-radius:2.500px;background:#d1ebfa"></div>
<div class="t" style="left:134.1px;top:356.93px;width:35.400px;text-align:center;font-size:8.400px;font-weight:500;color:#1f2329">已封版</div>
<div class="t" style="left:174.4px;top:357.23px;font-size:8.500px;color:#8f959e">6 个…</div>
<svg style="position:absolute;left:207.8px;top:357.33px;" width="11.4" height="11.4" viewBox="0 0 24 24"><circle cx="12" cy="12" r="12" fill="#c6dbf6"/><circle cx="12" cy="10.600" r="9.300" fill="#f4d058"/><path d="M17 4 Q22.500 8 20.500 15.500 L16.500 17 Z" fill="#f2a23a"/><ellipse cx="11.800" cy="11" rx="8.100" ry="7.700" fill="#fbd8cb"/><circle cx="16.300" cy="4.400" r="1.300" fill="#ef6a4a"/><ellipse cx="8.600" cy="10.200" rx="1" ry="0.800" fill="#8a6d5e"/><ellipse cx="15.300" cy="10.200" rx="1" ry="0.800" fill="#8a6d5e"/><circle cx="6.700" cy="12.600" r="1.500" fill="#f7a8a8"/><circle cx="16.900" cy="12.800" r="1.500" fill="#f7a8a8"/><ellipse cx="11.600" cy="14.300" rx="2.400" ry="2.200" fill="#b5342b"/><ellipse cx="11.800" cy="15.500" rx="1.500" ry="1" fill="#f48a8a"/><path d="M1.100 17 Q12 14.800 22.900 17 A12 12 0 0 1 1.100 17Z" fill="#a5cff5"/><path d="M5.500 17.700 Q12 16.500 18.500 17.700" fill="none" stroke="#fff" stroke-width="1.400" stroke-dasharray="2.200 0.700"/><path d="M2.400 19.200 Q12 17.900 21.600 19.200 A12 12 0 0 1 2.400 19.200Z" fill="#1e50b8"/><path d="M12 19 V23.500" stroke="#9fc3ee" stroke-width="0.800"/></svg>
<div class="t" style="left:221.6px;top:357.23px;font-size:8.700px;color:#2b2f36">Lilian</div>
<div class="t" style="left:280px;top:358.13px;font-size:8.200px;color:#c9cbcf">暂无</div>
<div class="t" style="left:28.8px;top:379.52px;width:20px;text-align:center;font-size:8.600px;color:#2b2f36">9</div>
<div class="t" style="left:63.7px;top:379.52px;font-size:8.500px;color:#1f2329;-webkit-text-stroke:0.220px #1f2329">v1.0.1</div>
<div style="position:absolute;left:134.1px;top:378.22px;width:35.400px;height:14.200px;border-radius:2.500px;background:#d8f0d4"></div>
<div class="t" style="left:134.1px;top:379.22px;width:35.400px;text-align:center;font-size:8.400px;font-weight:500;color:#1f2329">已发布</div>
<div class="t" style="left:174.4px;top:379.52px;font-size:8.500px;color:#8f959e">6 个…</div>
<svg style="position:absolute;left:207.8px;top:379.62px;" width="11.4" height="11.4" viewBox="0 0 24 24"><circle cx="12" cy="12" r="12" fill="#c6dbf6"/><circle cx="12" cy="10.600" r="9.300" fill="#f4d058"/><path d="M17 4 Q22.500 8 20.500 15.500 L16.500 17 Z" fill="#f2a23a"/><ellipse cx="11.800" cy="11" rx="8.100" ry="7.700" fill="#fbd8cb"/><circle cx="16.300" cy="4.400" r="1.300" fill="#ef6a4a"/><ellipse cx="8.600" cy="10.200" rx="1" ry="0.800" fill="#8a6d5e"/><ellipse cx="15.300" cy="10.200" rx="1" ry="0.800" fill="#8a6d5e"/><circle cx="6.700" cy="12.600" r="1.500" fill="#f7a8a8"/><circle cx="16.900" cy="12.800" r="1.500" fill="#f7a8a8"/><ellipse cx="11.600" cy="14.300" rx="2.400" ry="2.200" fill="#b5342b"/><ellipse cx="11.800" cy="15.500" rx="1.500" ry="1" fill="#f48a8a"/><path d="M1.100 17 Q12 14.800 22.900 17 A12 12 0 0 1 1.100 17Z" fill="#a5cff5"/><path d="M5.500 17.700 Q12 16.500 18.500 17.700" fill="none" stroke="#fff" stroke-width="1.400" stroke-dasharray="2.200 0.700"/><path d="M2.400 19.200 Q12 17.900 21.600 19.200 A12 12 0 0 1 2.400 19.200Z" fill="#1e50b8"/><path d="M12 19 V23.500" stroke="#9fc3ee" stroke-width="0.800"/></svg>
<div class="t" style="left:221.6px;top:379.52px;font-size:8.700px;color:#2b2f36">Lilian</div>
<div class="t" style="left:280px;top:380.42px;font-size:8.200px;color:#c9cbcf">暂无</div>
<div class="t" style="left:28.8px;top:401.81px;width:20px;text-align:center;font-size:8.600px;color:#2b2f36">10</div>
<div class="t" style="left:63.7px;top:401.81px;font-size:8.500px;color:#1f2329;-webkit-text-stroke:0.220px #1f2329">v2.0.1</div>
<div style="position:absolute;left:134.1px;top:400.51px;width:35.400px;height:14.200px;border-radius:2.500px;background:#e8e9eb"></div>
<div class="t" style="left:134.1px;top:401.51px;width:35.400px;text-align:center;font-size:8.400px;font-weight:500;color:#1f2329">未启动</div>
<div class="t" style="left:174.4px;top:401.81px;font-size:8.500px;color:#8f959e">6 个…</div>
<svg style="position:absolute;left:207.8px;top:401.91px;" width="11.4" height="11.4" viewBox="0 0 24 24"><circle cx="12" cy="12" r="12" fill="#c6dbf6"/><circle cx="12" cy="10.600" r="9.300" fill="#f4d058"/><path d="M17 4 Q22.500 8 20.500 15.500 L16.500 17 Z" fill="#f2a23a"/><ellipse cx="11.800" cy="11" rx="8.100" ry="7.700" fill="#fbd8cb"/><circle cx="16.300" cy="4.400" r="1.300" fill="#ef6a4a"/><ellipse cx="8.600" cy="10.200" rx="1" ry="0.800" fill="#8a6d5e"/><ellipse cx="15.300" cy="10.200" rx="1" ry="0.800" fill="#8a6d5e"/><circle cx="6.700" cy="12.600" r="1.500" fill="#f7a8a8"/><circle cx="16.900" cy="12.800" r="1.500" fill="#f7a8a8"/><ellipse cx="11.600" cy="14.300" rx="2.400" ry="2.200" fill="#b5342b"/><ellipse cx="11.800" cy="15.500" rx="1.500" ry="1" fill="#f48a8a"/><path d="M1.100 17 Q12 14.800 22.900 17 A12 12 0 0 1 1.100 17Z" fill="#a5cff5"/><path d="M5.500 17.700 Q12 16.500 18.500 17.700" fill="none" stroke="#fff" stroke-width="1.400" stroke-dasharray="2.200 0.700"/><path d="M2.400 19.200 Q12 17.900 21.600 19.200 A12 12 0 0 1 2.400 19.200Z" fill="#1e50b8"/><path d="M12 19 V23.500" stroke="#9fc3ee" stroke-width="0.800"/></svg>
<div class="t" style="left:221.6px;top:401.81px;font-size:8.700px;color:#2b2f36">Lilian</div>
<div class="t" style="left:280px;top:402.71px;font-size:8.200px;color:#c9cbcf">暂无</div>
</div>
<div id="panel">
<svg style="position:absolute;left:9.8px;top:5.200px" width="14.700" height="14.700" viewBox="0 0 14.700 14.700"><rect width="14.700" height="14.700" rx="4.500" fill="#f2c037"/><path d="M4.700 4 H10 V10.300 L7.350 9.100 L4.700 10.300Z" fill="#f4c94f" stroke="#fdeebb" stroke-width="0.900" stroke-linejoin="round"/></svg>
<div class="t" style="left:31.8px;top:6.7px;font-size:10.2px;color:#1f2329;font-weight:bold">v2.0.0</div>
<div style="position:absolute;left:66px;top:5.500px;width:34.300px;height:14.300px;border-radius:2.500px;background:#d2f1ee"></div>
<div class="t" style="left:66px;top:6.6px;font-size:8.2px;color:#1f2329;width:34.300px;text-align:center;font-weight:bold">开发中</div>
<div class="t" style="left:105.8px;top:6.6px;font-size:8.4px;color:#b9bcc2;">已进行 6 个月</div>
<svg style="position:absolute;left:170.8px;top:9.200px" width="6.600" height="6.800" viewBox="0 0 6.600 6.800" fill="none" stroke="#5f646c" stroke-width="0.700" stroke-linejoin="round"><path d="M1.800 0.400 H4.800 M2.200 0.400 V2.800 L0.800 4.200 H5.800 L4.400 2.800 V0.400 M3.300 4.200 V6.600"/></svg>
<div style="position:absolute;left:653.4px;top:2.800px;width:80px;height:18.800px;border:1px solid #e6e6e6;border-radius:4px"></div>
<div style="position:absolute;left:673.0px;top:7px;width:1px;height:11px;background:#e9e9e9"></div>
<div style="position:absolute;left:693.0px;top:7px;width:1px;height:11px;background:#e9e9e9"></div>
<div style="position:absolute;left:713.0px;top:7px;width:1px;height:11px;background:#e9e9e9"></div>
<svg style="position:absolute;left:659.1px;top:9px" width="10" height="8.200" viewBox="0 0 10 8.200" fill="none" stroke="#5f646c" stroke-width="0.750" stroke-linecap="round" stroke-linejoin="round"><circle cx="3.800" cy="2.300" r="1.800"/><path d="M0.500 7.800 V7 Q0.500 5 3.800 5 Q7 5 7 7 V7.800Z"/><path d="M6.600 0.800 Q8.200 1.200 8 2.800 Q7.800 3.800 6.900 4"/><path d="M8.400 5.600 Q9.500 6.200 9.500 7.800"/></svg>
<svg style="position:absolute;left:679.9px;top:8.400px" width="7.200" height="8.800" viewBox="0 0 7.200 8.800" fill="none" stroke="#5f646c" stroke-width="0.750" stroke-linecap="round" stroke-linejoin="round"><path d="M0.500 0.500 H6.700 V8.300 L3.600 6.400 L0.500 8.300Z"/><path d="M3.600 2.600 V4.400 M2.700 3.500 H4.500" stroke-width="0.600"/></svg>
<svg style="position:absolute;left:699.9px;top:8.600px" width="7.400" height="8" viewBox="0 0 7.400 8" fill="none" stroke="#5f646c" stroke-width="0.750" stroke-linecap="round" stroke-linejoin="round"><g transform="rotate(-45 3.700 4)"><rect x="-0.300" y="2.700" width="4.700" height="2.600" rx="1.300"/><rect x="3" y="2.700" width="4.700" height="2.600" rx="1.300"/></g></svg>
<svg style="position:absolute;left:719.3px;top:11.700px" width="8.400" height="1.600" viewBox="0 0 8.400 1.600"><circle cx="0.900" cy="0.800" r="0.800" fill="#3a3f47"/><circle cx="4.200" cy="0.800" r="0.800" fill="#3a3f47"/><circle cx="7.500" cy="0.800" r="0.800" fill="#3a3f47"/></svg>
<div style="position:absolute;left:741.3px;top:2.800px;width:18.300px;height:18.800px;border:1px solid #e6e6e6;border-radius:4px"></div>
<svg style="position:absolute;left:747px;top:9.200px" width="6.800" height="6.600" viewBox="0 0 6.800 6.600" fill="none" stroke="#3a3f47" stroke-width="0.900" stroke-linecap="round"><path d="M0.500 0.500 L6.300 6.100 M6.300 0.500 L0.500 6.100"/></svg>
<div class="hr" style="left:0;top:26px;width:767px;background:#ececec"></div>
<div class="t" style="left:13.1px;top:34.3px;font-size:8.4px;color:#4e535b;">基本信息</div>
<div class="t" style="left:72px;top:34.3px;font-size:8.4px;color:#4e535b;">规划需求</div>
<div class="t" style="left:131.5px;top:34.3px;font-size:8.4px;color:#4e535b;">评论/备注</div>
<svg style="position:absolute;left:174px;top:36.600px" width="8.800" height="7.400" viewBox="0 0 8.800 7.400" fill="none" stroke="#2b2f36" stroke-width="1"><path d="M1.600 7.200 V1.200"/><path d="M0 2.400 L1.600 0.300 L3.200 2.400Z" fill="#2b2f36" stroke="none"/><path d="M4.400 0.900 H8.800 M4.400 3.700 H8.800 M4.400 6.500 H8.800"/></svg>
<div class="t" style="left:207.8px;top:34.3px;font-size:8.4px;color:#4e535b;">操作记录</div>
<svg style="position:absolute;left:267.8px;top:34px" width="12" height="12" viewBox="0 0 12 12"><rect x="0.300" y="0.300" width="11.400" height="11.400" rx="2.600" fill="#fff" stroke="#ececec" stroke-width="0.600"/><path d="M6 1.500 L9.900 3.750 V8.250 L6 10.500 L2.100 8.250 V3.750Z" fill="#f0325e"/><path d="M6 3 L8.600 4.500 V7.500 L6 9 L3.400 7.500 V4.500Z" fill="#fff"/><path d="M5.300 4.800 H6.800 L5.300 6 H6.800 L5.300 7.200" fill="none" stroke="#f0325e" stroke-width="0.750"/></svg>
<div class="t" style="left:283.4px;top:34.3px;font-size:8.7px;color:#1f2329;-webkit-text-stroke:0.200px #1f2329;letter-spacing:0.100px">DevOps+</div>
<svg style="position:absolute;left:348px;top:34px" width="12" height="12" viewBox="0 0 12 12"><rect x="0.300" y="0.300" width="11.400" height="11.400" rx="2.600" fill="#fff" stroke="#ececec" stroke-width="0.600"/><path d="M6 1.500 L9.900 3.750 V8.250 L6 10.500 L2.100 8.250 V3.750Z" fill="#f0325e"/><path d="M6 3 L8.600 4.500 V7.500 L6 9 L3.400 7.500 V4.500Z" fill="#fff"/><path d="M5.300 4.800 H6.800 L5.300 6 H6.800 L5.300 7.200" fill="none" stroke="#f0325e" stroke-width="0.750"/></svg>
<div class="t" style="left:363.5px;top:34.3px;font-size:8.7px;color:#4e535b;">DevOps</div>
<div class="hr" style="left:0;top:54px;width:763px;background:#ececec"></div>
<div style="position:absolute;left:265.2px;top:52.800px;width:58px;height:1.700px;background:#2b45e8"></div>
<div style="position:absolute;left:618.3px;top:32.300px;width:41.600px;height:15.600px;border:1px solid #e6e6e6;border-radius:8px"></div>
<svg style="position:absolute;left:620.1px;top:34.3px;" width="11.4" height="11.4" viewBox="0 0 24 24"><circle cx="12" cy="12" r="12" fill="#c6dbf6"/><circle cx="12" cy="10.600" r="9.300" fill="#f4d058"/><path d="M17 4 Q22.500 8 20.500 15.500 L16.500 17 Z" fill="#f2a23a"/><ellipse cx="11.800" cy="11" rx="8.100" ry="7.700" fill="#fbd8cb"/><circle cx="16.300" cy="4.400" r="1.300" fill="#ef6a4a"/><ellipse cx="8.600" cy="10.200" rx="1" ry="0.800" fill="#8a6d5e"/><ellipse cx="15.300" cy="10.200" rx="1" ry="0.800" fill="#8a6d5e"/><circle cx="6.700" cy="12.600" r="1.500" fill="#f7a8a8"/><circle cx="16.900" cy="12.800" r="1.500" fill="#f7a8a8"/><ellipse cx="11.600" cy="14.300" rx="2.400" ry="2.200" fill="#b5342b"/><ellipse cx="11.800" cy="15.500" rx="1.500" ry="1" fill="#f48a8a"/><path d="M1.100 17 Q12 14.800 22.900 17 A12 12 0 0 1 1.100 17Z" fill="#a5cff5"/><path d="M5.500 17.700 Q12 16.500 18.500 17.700" fill="none" stroke="#fff" stroke-width="1.400" stroke-dasharray="2.200 0.700"/><path d="M2.400 19.200 Q12 17.900 21.600 19.200 A12 12 0 0 1 2.400 19.200Z" fill="#1e50b8"/><path d="M12 19 V23.500" stroke="#9fc3ee" stroke-width="0.800"/></svg>
<div class="t" style="left:634.6px;top:34.1px;font-size:8.5px;color:#4e535b;">Lilian</div>
<div style="position:absolute;left:670.1px;top:31px;width:84.200px;height:18.800px;border-radius:4px;background:#3350e8"></div>
<div class="t" style="left:693.9px;top:34.1px;font-size:8.2px;color:#fff;font-weight:bold">开发中</div>
<svg style="position:absolute;left:723px;top:38.700px" width="4.800" height="3.100" viewBox="0 0 4.200 2.800"><path d="M0 0 H4.200 L2.100 2.800Z" fill="#fff"/></svg>
<svg style="position:absolute;left:646.3px;top:71.500px" width="9" height="9.400" viewBox="0 0 9 9.400" fill="none" stroke="#1a6bff" stroke-width="1.300"><path d="M7.700 6.200 A3.600 3.600 0 1 1 6.900 2.500"/><path d="M8.700 0.500 V3.600 H5.600Z" fill="#1a6bff" stroke="none"/></svg>
<div class="t" style="left:659.9px;top:70.1px;font-size:8.3px;color:#1a6bff;font-weight:bold">刷新</div>
<div style="position:absolute;left:688.9px;top:67px;width:63px;height:19px;border-radius:2px;background:#f4f4f5"></div>
<svg style="position:absolute;left:695.7px;top:70.900px" width="10.600" height="11" viewBox="0 0 24 24"><path fill="#3a3f47" d="M19.140 12.940c.04-.3.060-.61.060-.94 0-.32-.02-.64-.07-.94l2.030-1.580a.49.490 0 0 0 .12-.61l-1.920-3.320a.488.488 0 0 0-.59-.22l-2.390.96c-.5-.38-1.030-.7-1.620-.94l-.36-2.540a.484.484 0 0 0-.48-.41h-3.840c-.24 0-.43.170-.47.410l-.36 2.540c-.59.240-1.130.57-1.620.94l-2.390-.96c-.22-.08-.47 0-.59.220L2.740 8.870c-.12.210-.08.470.12.610l2.030 1.580c-.05.300-.09.630-.09.940s.02.640.07.940l-2.030 1.580a.49.490 0 0 0-.12.610l1.920 3.320c.12.220.37.290.59.220l2.390-.96c.5.380 1.030.7 1.620.94l.36 2.540c.05.240.24.410.48.410h3.840c.24 0 .44-.17.470-.41l.36-2.540c.59-.24 1.130-.56 1.620-.94l2.390.96c.22.080.47 0 .59-.22l1.920-3.320c.12-.22.070-.47-.12-.61l-2.010-1.580zM12 15.600c-1.980 0-3.600-1.620-3.600-3.600s1.620-3.600 3.600-3.600 3.600 1.620 3.600 3.600-1.620 3.600-3.600 3.600z"/></svg>
<div class="t" style="left:710.8px;top:70.1px;font-size:8.3px;color:#3a3f47;font-weight:500">鉴权配置</div>
<div style="position:absolute;left:12.7px;top:95.500px;width:739px;height:237.300px;border:1px solid #efefef;border-radius:4px;box-shadow:0 0.500px 1px rgba(0,0,0,.04)"></div>
<div class="t" style="left:22.9px;top:104.4px;font-size:9.4px;color:#1f2329;font-weight:bold">发布记录</div>
<div class="t" style="left:32.3px;top:148.9px;font-size:8.2px;color:#5f646c;">ID</div>
<div class="t" style="left:80.7px;top:148.9px;font-size:8.2px;color:#5f646c;">运行状态</div>
<div class="t" style="left:134.6px;top:148.9px;font-size:8.2px;color:#5f646c;">持续时间</div>
<div class="t" style="left:189px;top:148.9px;font-size:8.2px;color:#5f646c;">执行人</div>
<div class="t" style="left:272.9px;top:148.9px;font-size:8.2px;color:#5f646c;">分支信息</div>
<div class="t" style="left:411.1px;top:148.9px;font-size:8.2px;color:#5f646c;">服务组件</div>
<div class="t" style="left:642.7px;top:148.9px;font-size:8.2px;color:#5f646c;">部署环境</div>
<div class="t" style="left:703px;top:148.9px;font-size:8.2px;color:#5f646c;">操作</div>
<div class="hr" style="left:22.5px;top:165px;width:719.500px;background:#eeeeee"></div>
<div class="hr" style="left:22.5px;top:202px;width:719.500px;background:#eeeeee"></div>
<div class="t" style="left:32.2px;top:177.9px;font-size:8.7px;color:#1a6bff;font-weight:bold">#8</div>
<div style="position:absolute;left:80.8px;top:176.300px;width:25.300px;height:14.700px;border-radius:2px;background:#e3f3e3"></div>
<div class="t" style="left:80.9px;top:178.0px;font-size:7.9px;color:#1f2329;width:25px;text-align:center;font-weight:500">成功</div>
<svg style="position:absolute;left:135px;top:180px" width="6.600" height="6.600" viewBox="0 0 6.200 6.200"><circle cx="3.100" cy="3.100" r="3.100" fill="#4a4f57"/><path d="M3.100 1.400 V3.300 L4.300 4" fill="none" stroke="#fff" stroke-width="0.700"/></svg>
<div class="t" style="left:146.7px;top:176.8px;font-size:8.5px;color:#2b2f36;">35s</div>
<div class="t" style="left:189px;top:171.7px;font-size:8px;color:#3a3f47;">admin</div>
<div class="t" style="left:189px;top:184.8px;font-size:6.9px;color:#adb0b6;">03-17 13:03</div>
<svg style="position:absolute;left:273.7px;top:179.300px" width="6" height="7" viewBox="0 0 6 7" fill="none" stroke="#1a6bff" stroke-width="0.900"><path d="M1.300 1.500 V5.600 M1.300 4.400 Q4.600 4.200 4.600 2.400"/><circle cx="1.300" cy="1.100" r="0.700" fill="#1a6bff"/><circle cx="1.300" cy="6" r="0.700" fill="#1a6bff"/><circle cx="4.600" cy="2" r="0.700" fill="#1a6bff"/></svg>
<div class="t" style="left:282.8px;top:176.9px;font-size:7.3px;color:#1a6bff;-webkit-text-stroke:0.250px #1a6bff">main</div>
<div class="t" style="left:411.1px;top:171.3px;font-size:8.15px;color:#2b2f36;">service1(service1)</div>
<div class="t" style="left:411.1px;top:184.7px;font-size:8.15px;color:#2b2f36;letter-spacing:0.170px">service3(service3)</div>
<div class="t" style="left:642.7px;top:177.2px;font-size:8.3px;color:#2b2f36;">dev</div>
<svg style="position:absolute;left:704px;top:177.800px" width="8.400" height="8.400" viewBox="0 0 8.200 8" fill="#1a6bff"><rect x="0" y="7.100" width="8.200" height="0.900"/><rect x="0.700" y="2.600" width="1.700" height="4.600"/><rect x="3.200" y="3.800" width="1.700" height="3.400"/><rect x="5.700" y="0.200" width="1.700" height="7"/></svg>
<div class="hr" style="left:13.2px;top:212px;width:738px;background:#f0f0f0"></div>
<div class="t" style="left:22.9px;top:225.8px;font-size:9.3px;color:#1f2329;font-weight:bold">发布单</div>
<div style="position:absolute;left:705.5px;top:219.700px;width:36.300px;height:24.200px;border-radius:2px;background:#1062f5"></div>
<div class="t" style="left:705.5px;top:225.7px;font-size:8.2px;color:#fff;width:36.300px;text-align:center;font-weight:bold">发布</div>
<div class="hr" style="left:13.2px;top:251px;width:738px;background:#f0f0f0"></div>
<div class="t" style="left:22.8px;top:265.6px;font-size:8.3px;color:#5f646c;">工作项</div>
<div class="t" style="left:213.5px;top:265.6px;font-size:8.3px;color:#5f646c;">状态</div>
<div class="t" style="left:404.6px;top:265.6px;font-size:8.3px;color:#5f646c;">关联服务</div>
<div class="t" style="left:518.9px;top:265.6px;font-size:8.3px;color:#5f646c;">分支</div>
<div class="t" style="left:659.1px;top:265.6px;font-size:8.3px;color:#5f646c;">操作</div>
<div class="hr" style="left:13.2px;top:282px;width:738px;background:#f0f0f0"></div>
<div class="hr" style="left:13.2px;top:307px;width:738px;background:#f0f0f0"></div>
<div style="position:absolute;left:22.3px;top:288.9px;width:29.300px;height:14px;border-radius:2px;background:#dbe6fb"></div>
<div class="t" style="left:22.3px;top:289.5px;font-size:8.3px;color:#2b2f36;width:29.300px;text-align:center">story</div>
<div class="t" style="left:56.5px;top:289.6px;font-size:8.35px;color:#1a6bff;font-weight:bold">违规行为处罚措施设计</div>
<div style="position:absolute;left:213.7px;top:288.9px;width:40.600px;height:14px;border-radius:2px;background:#e3f3e3"></div>
<div class="t" style="left:213.7px;top:289.6px;font-size:7.7px;color:#1f2329;width:40.600px;text-align:center;font-weight:500">集成测试</div>
<div class="t" style="left:404.6px;top:289.5px;font-size:8.4px;color:#2b2f36;">service3/service3</div>
<div style="position:absolute;left:519px;top:290.1px;width:24.800px;height:11px;border-radius:2px;background:#fdebd8"></div>
<div class="t" style="left:519px;top:290.2px;font-size:7.5px;color:#8a5a2b;width:24.800px;text-align:center">main</div>
<svg style="position:absolute;left:550px;top:291.1px" width="9.200" height="9.200" viewBox="0 0 9.200 9.200"><circle cx="4.600" cy="4.600" r="4.600" fill="#2fb344"/><path d="M2.500 4.700 L4 6.200 L6.700 3.300" fill="none" stroke="#fff" stroke-width="1.100"/></svg>
<div class="t" style="left:659.1px;top:289.6px;font-size:7.65px;color:#1a6bff;font-weight:bold">查看详情</div>
<svg style="position:absolute;left:695.7px;top:292.7px" width="5.600" height="6.600" viewBox="0 0 5 6" fill="#f5302d"><path d="M0 1.200 H5 V2 H0Z M1.700 0.300 H3.300 V1.200 H1.700Z M0.500 2.400 H4.500 L4 6 H1Z"/></svg>
<div class="t" style="left:708.1px;top:289.6px;font-size:7.45px;color:#f5302d;font-weight:bold">移除</div>
<div style="position:absolute;left:22.3px;top:313.3px;width:29.300px;height:14px;border-radius:2px;background:#dbe6fb"></div>
<div class="t" style="left:22.3px;top:313.9px;font-size:8.3px;color:#2b2f36;width:29.300px;text-align:center">story</div>
<div class="t" style="left:56.5px;top:314.0px;font-size:8.35px;color:#1a6bff;font-weight:bold">数据加密和防篡改</div>
<div style="position:absolute;left:213.7px;top:313.3px;width:40.600px;height:14px;border-radius:2px;background:#e3f3e3"></div>
<div class="t" style="left:213.7px;top:314.0px;font-size:7.7px;color:#1f2329;width:40.600px;text-align:center;font-weight:500">研发联调</div>
<div class="t" style="left:404.6px;top:313.9px;font-size:8.4px;color:#2b2f36;">service1/service1</div>
<div style="position:absolute;left:519px;top:314.5px;width:24.800px;height:11px;border-radius:2px;background:#fdebd8"></div>
<div class="t" style="left:519px;top:314.6px;font-size:7.5px;color:#8a5a2b;width:24.800px;text-align:center">main</div>
<svg style="position:absolute;left:550px;top:315.5px" width="9.200" height="9.200" viewBox="0 0 9.200 9.200"><circle cx="4.600" cy="4.600" r="4.600" fill="#f5302d"/><path d="M3 3 L6.200 6.200 M6.200 3 L3 6.200" fill="none" stroke="#fff" stroke-width="1.100"/></svg>
<div class="t" style="left:659.1px;top:314.0px;font-size:7.65px;color:#1a6bff;font-weight:bold">查看详情</div>
<svg style="position:absolute;left:695.7px;top:317.1px" width="5.600" height="6.600" viewBox="0 0 5 6" fill="#f5302d"><path d="M0 1.200 H5 V2 H0Z M1.700 0.300 H3.300 V1.200 H1.700Z M0.500 2.400 H4.500 L4 6 H1Z"/></svg>
<div class="t" style="left:708.1px;top:314.0px;font-size:7.45px;color:#f5302d;font-weight:bold">移除</div>
<div class="hr" style="left:0;top:604px;width:767px;background:#e9e9e9"></div>
<svg style="position:absolute;left:15.5px;top:613.5px;" width="19.2" height="19.2" viewBox="0 0 24 24"><circle cx="12" cy="12" r="12" fill="#c6dbf6"/><circle cx="12" cy="10.600" r="9.300" fill="#f4d058"/><path d="M17 4 Q22.500 8 20.500 15.500 L16.500 17 Z" fill="#f2a23a"/><ellipse cx="11.800" cy="11" rx="8.100" ry="7.700" fill="#fbd8cb"/><circle cx="16.300" cy="4.400" r="1.300" fill="#ef6a4a"/><ellipse cx="8.600" cy="10.200" rx="1" ry="0.800" fill="#8a6d5e"/><ellipse cx="15.300" cy="10.200" rx="1" ry="0.800" fill="#8a6d5e"/><circle cx="6.700" cy="12.600" r="1.500" fill="#f7a8a8"/><circle cx="16.900" cy="12.800" r="1.500" fill="#f7a8a8"/><ellipse cx="11.600" cy="14.300" rx="2.400" ry="2.200" fill="#b5342b"/><ellipse cx="11.800" cy="15.500" rx="1.500" ry="1" fill="#f48a8a"/><path d="M1.100 17 Q12 14.800 22.900 17 A12 12 0 0 1 1.100 17Z" fill="#a5cff5"/><path d="M5.500 17.700 Q12 16.500 18.500 17.700" fill="none" stroke="#fff" stroke-width="1.400" stroke-dasharray="2.200 0.700"/><path d="M2.400 19.200 Q12 17.900 21.600 19.200 A12 12 0 0 1 2.400 19.200Z" fill="#1e50b8"/><path d="M12 19 V23.500" stroke="#9fc3ee" stroke-width="0.800"/></svg>
<div style="position:absolute;left:44.4px;top:611.300px;width:710.400px;height:23px;border-radius:4px;background:#f4f4f5"></div>
<div class="t" style="left:50.8px;top:615.700px;font-size:8.550px;color:#8f959e;font-family:'Liberation Sans','Noto Sans CJK SC','DejaVu Sans',sans-serif">请输入评论（Enter 换行，⌘ + Enter 发送）</div>
<div style="position:absolute;left:715.5px;top:580px;width:39px;height:24px;border-radius:12px;background:#6f60f0;box-shadow:0 2px 10px rgba(0,0,0,.10)"></div>
<div style="position:absolute;left:721.8px;top:587.400px;width:9.200px;height:9.200px;border-radius:50%;background:#fff;color:#6f60f0;font-size:7.500px;font-weight:bold;line-height:9.400px;text-align:center">?</div>
<div class="t" style="left:734.8px;top:586.0px;font-size:7.2px;color:#fff;font-weight:bold">帮助</div>
</div>
<div id="fl">
<div style="position:absolute;left:489.8px;top:27px;width:18.500px;height:38px;border-radius:3.500px;background:#fff;box-shadow:0 0.500px 3px rgba(0,0,0,.18)"></div>
<div class="hr" style="left:489.8px;top:45px;width:18.500px;background:#ededed"></div>
<svg style="position:absolute;left:496px;top:34.600px" width="5.600" height="3.600" viewBox="0 0 5.600 3.600"><path d="M2.800 0 L5.600 3.600 H0Z" fill="#3a3f47"/></svg>
<svg style="position:absolute;left:496px;top:53.900px" width="5.600" height="3.600" viewBox="0 0 5.600 3.600"><path d="M0 0 H5.600 L2.800 3.600Z" fill="#3a3f47"/></svg>
</div>
</body>
</html>
